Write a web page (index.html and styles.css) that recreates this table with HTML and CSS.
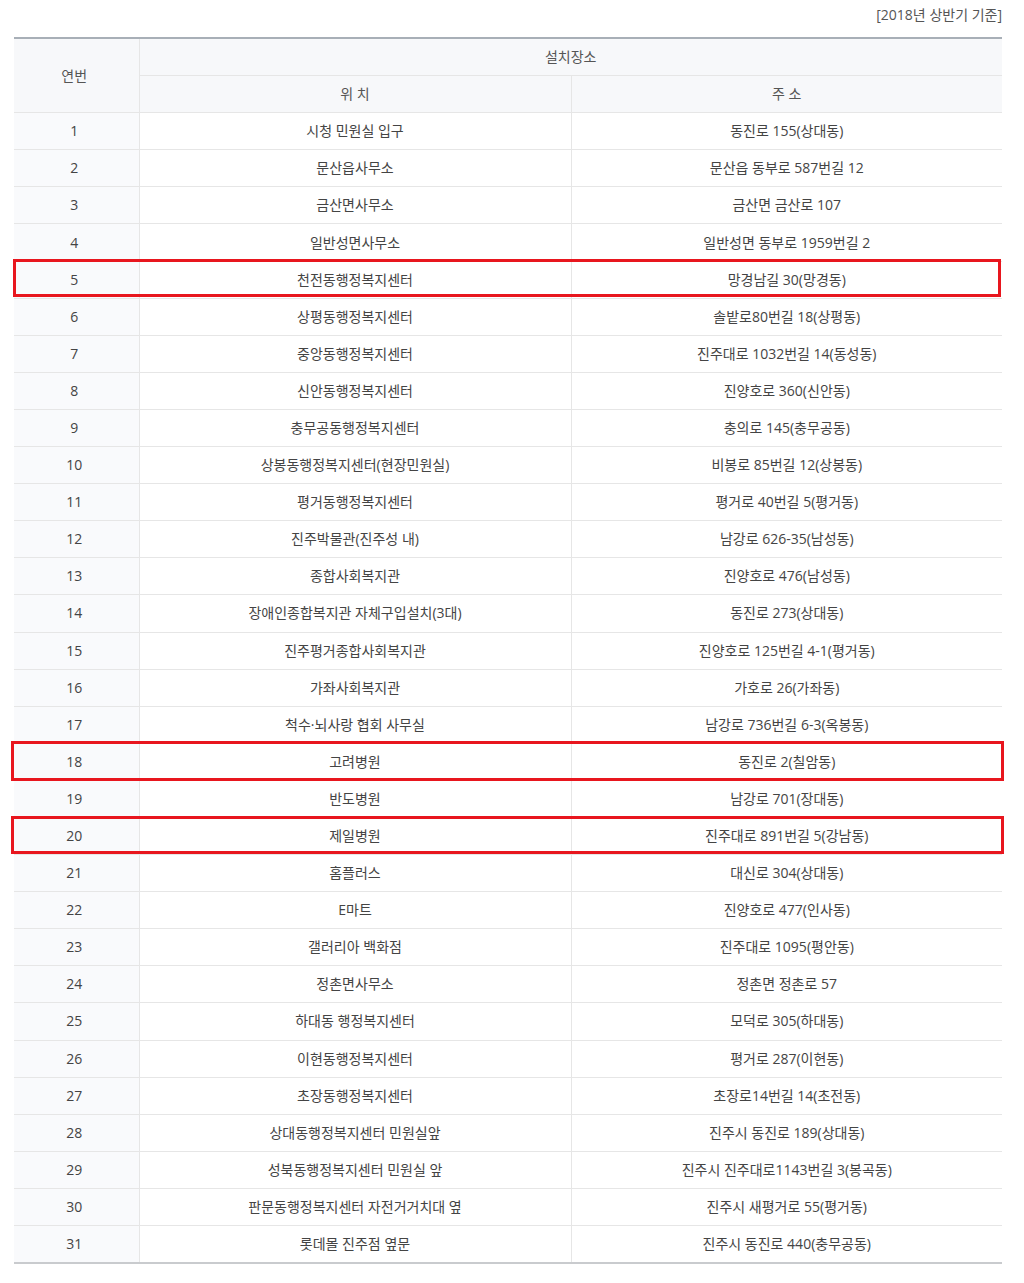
FILE: index.html
```html
<!DOCTYPE html>
<html lang="ko">
<head>
<meta charset="utf-8">
<title>설치장소</title>
<link rel="stylesheet" href="styles.css">
</head>
<body>
<div class="page">
  <p class="basis">[2018년 상반기 기준]</p>
  <div class="table-wrap">
    <table class="list">
      <colgroup>
        <col class="c-no">
        <col class="c-loc">
        <col class="c-addr">
      </colgroup>
      <thead>
        <tr>
          <th rowspan="2" class="no">연번</th>
          <th colspan="2">설치장소</th>
        </tr>
        <tr>
          <th>위 치</th>
          <th>주 소</th>
        </tr>
      </thead>
      <tbody>
        <tr><td class="no">1</td><td>시청 민원실 입구</td><td>동진로 155(상대동)</td></tr>
        <tr><td class="no">2</td><td>문산읍사무소</td><td>문산읍 동부로 587번길 12</td></tr>
        <tr><td class="no">3</td><td>금산면사무소</td><td>금산면 금산로 107</td></tr>
        <tr><td class="no">4</td><td>일반성면사무소</td><td>일반성면 동부로 1959번길 2</td></tr>
        <tr><td class="no">5</td><td>천전동행정복지센터</td><td>망경남길 30(망경동)</td></tr>
        <tr><td class="no">6</td><td>상평동행정복지센터</td><td>솔밭로80번길 18(상평동)</td></tr>
        <tr><td class="no">7</td><td>중앙동행정복지센터</td><td>진주대로 1032번길 14(동성동)</td></tr>
        <tr><td class="no">8</td><td>신안동행정복지센터</td><td>진양호로 360(신안동)</td></tr>
        <tr><td class="no">9</td><td>충무공동행정복지센터</td><td>충의로 145(충무공동)</td></tr>
        <tr><td class="no">10</td><td>상봉동행정복지센터(현장민원실)</td><td>비봉로 85번길 12(상봉동)</td></tr>
        <tr><td class="no">11</td><td>평거동행정복지센터</td><td>평거로 40번길 5(평거동)</td></tr>
        <tr><td class="no">12</td><td>진주박물관(진주성 내)</td><td>남강로 626-35(남성동)</td></tr>
        <tr><td class="no">13</td><td>종합사회복지관</td><td>진양호로 476(남성동)</td></tr>
        <tr><td class="no">14</td><td>장애인종합복지관 자체구입설치(3대)</td><td>동진로 273(상대동)</td></tr>
        <tr><td class="no">15</td><td>진주평거종합사회복지관</td><td>진양호로 125번길 4-1(평거동)</td></tr>
        <tr><td class="no">16</td><td>가좌사회복지관</td><td>가호로 26(가좌동)</td></tr>
        <tr><td class="no">17</td><td>척수·뇌사랑 협회 사무실</td><td>남강로 736번길 6-3(옥봉동)</td></tr>
        <tr><td class="no">18</td><td>고려병원</td><td>동진로 2(칠암동)</td></tr>
        <tr><td class="no">19</td><td>반도병원</td><td>남강로 701(장대동)</td></tr>
        <tr><td class="no">20</td><td>제일병원</td><td>진주대로 891번길 5(강남동)</td></tr>
        <tr><td class="no">21</td><td>홈플러스</td><td>대신로 304(상대동)</td></tr>
        <tr><td class="no">22</td><td>E마트</td><td>진양호로 477(인사동)</td></tr>
        <tr><td class="no">23</td><td>갤러리아 백화점</td><td>진주대로 1095(평안동)</td></tr>
        <tr><td class="no">24</td><td>정촌면사무소</td><td>정촌면 정촌로 57</td></tr>
        <tr><td class="no">25</td><td>하대동 행정복지센터</td><td>모덕로 305(하대동)</td></tr>
        <tr><td class="no">26</td><td>이현동행정복지센터</td><td>평거로 287(이현동)</td></tr>
        <tr><td class="no">27</td><td>초장동행정복지센터</td><td>초장로14번길 14(초전동)</td></tr>
        <tr><td class="no">28</td><td>상대동행정복지센터 민원실앞</td><td>진주시 동진로 189(상대동)</td></tr>
        <tr><td class="no">29</td><td>성북동행정복지센터 민원실 앞</td><td>진주시 진주대로1143번길 3(봉곡동)</td></tr>
        <tr><td class="no">30</td><td>판문동행정복지센터 자전거거치대 옆</td><td>진주시 새평거로 55(평거동)</td></tr>
        <tr><td class="no">31</td><td>롯데몰 진주점 옆문</td><td>진주시 동진로 440(충무공동)</td></tr>
      </tbody>
    </table>
    <div class="mark mark-5"></div>
    <div class="mark mark-18"></div>
    <div class="mark mark-20"></div>
  </div>
</div>
</body>
</html>
```

FILE: styles.css
```css
html, body {
  margin: 0;
  padding: 0;
  background: #fff;
}

body {
  font-family: "Open Sans", "Noto Sans CJK KR", sans-serif;
  font-size: 14px;
  color: #444;
}

.page {
  width: 988px;
  padding: 0 22px 0 14px;
}

.basis {
  margin: 0;
  padding: 5px 0 0;
  height: 37px;
  box-sizing: border-box;
  line-height: 20px;
  text-align: right;
  color: #555;
  font-size: 14px;
}

.table-wrap {
  position: relative;
}

.list {
  width: 988px;
  border-collapse: collapse;
  table-layout: fixed;
  border-top: 2px solid #a8afb7;
  border-bottom: 2px solid #c9cbce;
}

.c-no { width: 125px; }
.c-loc { width: 432px; }
.c-addr { width: 431px; }

.list th,
.list td {
  height: 36.1px;
  padding: 0;
  text-align: center;
  vertical-align: middle;
  font-weight: normal;
  line-height: 20px;
  border-bottom: 1px solid #e6e6e6;
  border-left: 1px solid #e6e6e6;
}

.list th:first-child,
.list td:first-child {
  border-left: 0;
}

.list thead tr:nth-child(2) th:first-child {
  border-left: 1px solid #e6e6e6;
}

.list th.no,
.list td.no {
  padding-right: 4px;
}

.list th {
  background: #f7f8fa;
  color: #555;
}

.list td.no {
  background: #f9fafc;
}

.list td {
  color: #444;
}

.mark {
  position: absolute;
  border: 3px solid #e8161e;
  box-sizing: border-box;
  pointer-events: none;
}

.mark-5 {
  left: -1px;
  width: 988px;
  top: 222px;
  height: 38px;
}

.mark-18 {
  left: -3px;
  width: 993px;
  top: 704px;
  height: 40px;
}

.mark-20 {
  left: -3px;
  width: 993px;
  top: 779px;
  height: 38px;
}
```
